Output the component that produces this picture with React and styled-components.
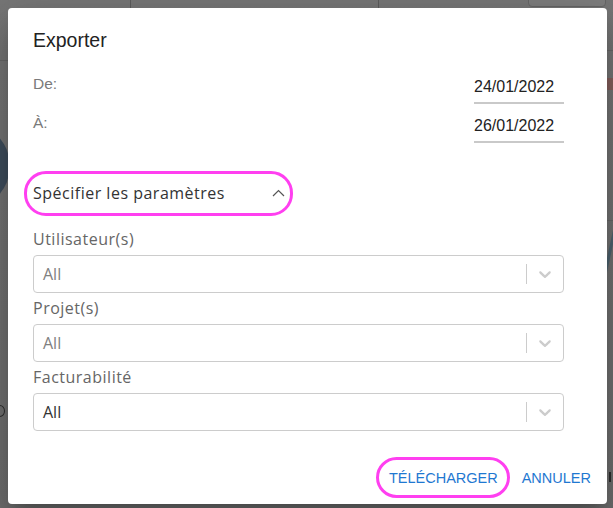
import React from "react";
import styled, { createGlobalStyle, css } from "styled-components";

const GlobalStyle = createGlobalStyle`
  html, body {
    margin: 0;
    padding: 0;
    width: 613px;
    height: 508px;
    overflow: hidden;
  }
  body {
    background: #767676;
    font-family: "Liberation Sans", Arial, sans-serif;
  }
  * { box-sizing: border-box; }
`;

const Page = styled.div`
  position: relative;
  width: 613px;
  height: 508px;
  overflow: hidden;
  background: linear-gradient(#777777, #6f6f6f);
`;

/* ---- dimmed app behind the modal (only edges are visible) ---- */
const Backdrop = styled.div`
  position: absolute;
  inset: 0;
`;

const HeaderCell = styled.div`
  position: absolute;
  top: 0;
  left: ${(p) => p.$x}px;
  width: 1px;
  height: 10px;
  background: #5c5c5c;
`;

const HeaderTab = styled.div`
  position: absolute;
  top: -6px;
  left: 528px;
  width: 78px;
  height: 13px;
  border-radius: 4px;
  background: #7e7e7e;
  border: 1px solid #666;
`;

const RuleLine = styled.div`
  position: absolute;
  top: ${(p) => p.$y}px;
  left: ${(p) => p.$x}px;
  width: ${(p) => p.$w}px;
  height: 1px;
  background: #686868;
`;

const AvatarBlob = styled.div`
  position: absolute;
  top: 123px;
  left: -76px;
  width: 86px;
  height: 86px;
  border-radius: 50%;
  background: #3f4e5d;
`;

const RedBar = styled.div`
  position: absolute;
  top: 78px;
  left: 598px;
  width: 20px;
  height: 12px;
  background: #86605d;
`;

const BlueStroke = styled.div`
  position: absolute;
  top: 228px;
  left: 606px;
  width: 3px;
  height: 70px;
  background: #4e6470;
  transform: rotate(12deg);
`;

const EdgeRing = styled.div`
  position: absolute;
  top: 405px;
  left: -5px;
  width: 10px;
  height: 12px;
  border: 1.5px solid #2e2e2e;
  border-radius: 50%;
`;

const EdgeTick = styled.div`
  position: absolute;
  top: 472px;
  left: 609px;
  width: 1.5px;
  height: 10px;
  background: #2e2e2e;
`;

/* ---- dialog ---- */
const Dialog = styled.div`
  position: absolute;
  top: 8px;
  left: 8px;
  width: 599px;
  height: 496px;
  background: #fff;
  border-radius: 4px;
  box-shadow: 0 11px 15px -7px rgba(0, 0, 0, 0.2),
    0 24px 38px 3px rgba(0, 0, 0, 0.14), 0 9px 46px 8px rgba(0, 0, 0, 0.12);
  display: flex;
  flex-direction: column;
`;

const Title = styled.h2`
  margin: 0;
  padding: 16px 24px 0 25px;
  font-family: "Liberation Sans", Arial, sans-serif;
  font-size: 19.5px;
  line-height: 32px;
  font-weight: 400;
  color: #222;
`;

const Content = styled.div`
  padding: 8px 43px 0 25px;
  display: flex;
  flex-direction: column;
`;

const DateRow = styled.div`
  display: flex;
  justify-content: space-between;
  align-items: flex-start;
  height: 39px;
  padding-top: 10px;
`;

const RowLabel = styled.span`
  font-family: "Liberation Sans", Arial, sans-serif;
  font-size: 15.5px;
  line-height: 20px;
  color: #7a7a7a;
`;

const DateValue = styled.div`
  margin-top: 3px;
  width: 90px;
  padding-bottom: 5px;
  border-bottom: 2px solid #c9c9c9;
  font-family: "Liberation Sans", Arial, sans-serif;
  font-size: 16px;
  line-height: 20px;
  color: #222;
`;

const highlightRing = css`
  &::after {
    content: "";
    position: absolute;
    border: 3px solid #ff3ff0;
    border-radius: 22px;
    pointer-events: none;
  }
`;

const Toggle = styled.div`
  position: relative;
  margin-top: 39px;
  width: 252px;
  height: 24px;
  display: flex;
  justify-content: space-between;
  align-items: center;
  font-family: "Open Sans", "Noto Sans", sans-serif;
  font-size: 16px;
  letter-spacing: 0.5px;
  line-height: 24px;
  color: #333;
  ${highlightRing}
  &::after {
    top: -10px;
    bottom: -11px;
    left: -9px;
    right: -8px;
  }
`;

const Fields = styled.div`
  margin-top: 22px;
  display: flex;
  flex-direction: column;
`;

const FieldLabel = styled.div`
  font-family: "Open Sans", "Noto Sans", sans-serif;
  font-size: 16px;
  letter-spacing: 0.5px;
  line-height: 24px;
  color: #666;
  margin-bottom: 4px;
`;

const SelectControl = styled.div`
  height: 38px;
  border: 1px solid #cccccc;
  border-radius: 4px;
  display: flex;
  align-items: center;
  margin-bottom: 3px;
  background: #fff;
`;

const SelectValue = styled.span`
  flex: 1;
  padding: 0 9px;
  font-family: "Open Sans", "Noto Sans", sans-serif;
  font-size: 16px;
  line-height: 20px;
  color: ${(p) => (p.$placeholder ? "#808080" : "#333")};
`;

const Separator = styled.span`
  width: 1px;
  align-self: stretch;
  margin: 8px 0;
  background: #cccccc;
`;

const Indicator = styled.span`
  display: flex;
  padding: 8px;
  color: #cccccc;
`;

const Actions = styled.div`
  margin-top: auto;
  display: flex;
  justify-content: flex-end;
  gap: 8px;
  padding: 8px;
`;

const ActionButton = styled.button`
  position: relative;
  background: none;
  border: none;
  padding: 6px 8px;
  font-family: "Liberation Sans", Arial, sans-serif;
  font-size: 14.5px;
  line-height: 24px;
  font-weight: 400;
  letter-spacing: 0;
  text-transform: uppercase;
  color: #1f78d1;
  cursor: pointer;
  ${(p) =>
    p.$highlight &&
    css`
      ${highlightRing}
      &::after {
        top: -3px;
        bottom: -2px;
        left: -5px;
        right: -4px;
      }
    `}
`;

const ChevronDown = () => (
  <svg width="20" height="20" viewBox="0 0 20 20" fill="currentColor">
    <path d="M4.516 7.548c0.436-0.446 1.043-0.481 1.576 0l3.908 3.747 3.908-3.747c0.533-0.481 1.141-0.446 1.574 0 0.436 0.445 0.408 1.197 0 1.615-0.406 0.418-4.695 4.502-4.695 4.502-0.217 0.223-0.502 0.335-0.787 0.335s-0.57-0.112-0.789-0.335c0 0-4.287-4.084-4.695-4.502s-0.436-1.17 0-1.615z" />
  </svg>
);

const ChevronUp = () => (
  <svg width="13" height="8" viewBox="0 0 13 8" fill="none">
    <path d="M1 7 L6.5 1.5 L12 7" stroke="#555" strokeWidth="1.2" />
  </svg>
);

const Select = ({ value, placeholder }) => (
  <SelectControl>
    <SelectValue $placeholder={placeholder}>{value}</SelectValue>
    <Separator />
    <Indicator>
      <ChevronDown />
    </Indicator>
  </SelectControl>
);

const fields = [
  { label: "Utilisateur(s)", value: "All", placeholder: true },
  { label: "Projet(s)", value: "All", placeholder: true },
  { label: "Facturabilité", value: "All", placeholder: false },
];

export default function App() {
  return (
    <Page>
      <GlobalStyle />
      <Backdrop>
        <HeaderCell $x={130} />
        <HeaderCell $x={378} />
        <HeaderTab />
        <RuleLine $x={0} $y={60} $w={10} />
        <RuleLine $x={600} $y={50} $w={13} />
        <RuleLine $x={600} $y={220} $w={13} />
        <AvatarBlob />
        <RedBar />
        <BlueStroke />
        <EdgeRing />
        <EdgeTick />
      </Backdrop>
      <Dialog>
        <Title>Exporter</Title>
        <Content>
          <DateRow>
            <RowLabel>De:</RowLabel>
            <DateValue>24/01/2022</DateValue>
          </DateRow>
          <DateRow>
            <RowLabel>À:</RowLabel>
            <DateValue>26/01/2022</DateValue>
          </DateRow>
          <Toggle>
            <span>Spécifier les paramètres</span>
            <ChevronUp />
          </Toggle>
          <Fields>
            {fields.map((f) => (
              <div key={f.label}>
                <FieldLabel>{f.label}</FieldLabel>
                <Select value={f.value} placeholder={f.placeholder} />
              </div>
            ))}
          </Fields>
        </Content>
        <Actions>
          <ActionButton $highlight>Télécharger</ActionButton>
          <ActionButton>Annuler</ActionButton>
        </Actions>
      </Dialog>
    </Page>
  );
}
